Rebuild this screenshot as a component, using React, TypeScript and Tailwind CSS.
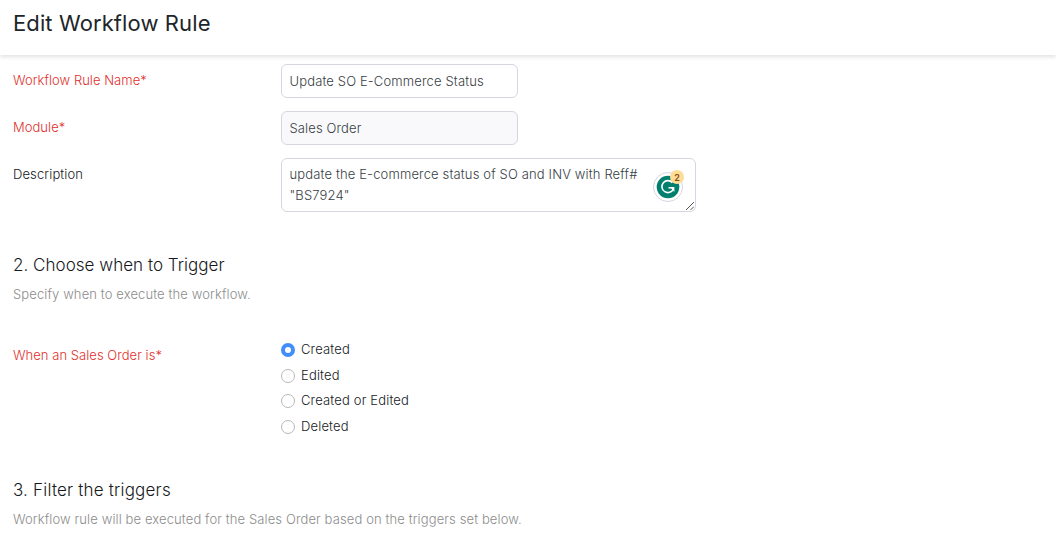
import React from "react";

const triggers = ["Created", "Edited", "Created or Edited", "Deleted"];

function Label({ children, required = false }: { children: string; required?: boolean }) {
  return (
    <div className={`w-[268px] shrink-0 leading-[20px] ${required ? "tracking-[0.04px] text-[#e0302d]" : "tracking-[0.12px] text-[#16191c]"}`}>
      {children}
      {required && "*"}
    </div>
  );
}

function Heading({ children }: { children: React.ReactNode }) {
  return <h2 className="text-[17px] leading-[24px] text-[#16191c]">{children}</h2>;
}

function Hint({ children }: { children: string }) {
  return <p className="mt-[7px] leading-[20px] tracking-[0.115px] text-[#8c8c8c]">{children}</p>;
}

function AssistantBadge() {
  return (
    <div className="absolute left-[371px] top-[12px] h-[32px] w-[32px]">
      <svg width="32" height="32" viewBox="0 0 32 32" fill="none">
        <circle cx="16" cy="17" r="14.5" fill="#fff" stroke="#d7d5e2" />
        <circle cx="16" cy="17" r="11.3" fill="#027e6f" />
        <path d="M20.4 12.6A6 6 0 1 0 21.4 19" stroke="#fff" strokeWidth="1.6" />
        <path d="M16.5 17.8H21.6" stroke="#fff" strokeWidth="1.5" />
        <path d="M18.2 17H22.4V22z" fill="#fff" />
      </svg>
      <span className="absolute left-[18px] top-[0px] flex h-[14px] w-[14px] items-center justify-center rounded-full bg-[#ffdb98] text-[9px] font-semibold leading-none tracking-normal text-[#80500b]">
        2
      </span>
    </div>
  );
}

export default function App() {
  return (
    <main className="h-[555px] w-[1056px] overflow-hidden bg-white font-['Inter',sans-serif] text-[13px] font-[350] text-[#16191c]">
      <header className="h-[55px] bg-white pl-[13px] pt-[8px] shadow-[0_2px_4px_rgba(0,0,0,0.12)]">
        <h1 className="text-[22px] font-normal leading-[30px] tracking-[0.11px] text-[#212529]">Edit Workflow Rule</h1>
      </header>
      <div className="flex flex-col pl-[13px]">
        <div className="mt-[9px] flex h-[34px] items-start">
          <div className="pt-[6px]">
            <Label required>Workflow Rule Name</Label>
          </div>
          <input
            className="h-[34px] w-[237px] rounded-[6px] border border-[#d7d5e2] bg-white px-[7.5px] tracking-[0.14px] text-[#383e45] outline-none"
            defaultValue="Update SO E-Commerce Status"
          />
        </div>
        <div className="mt-[13px] flex h-[34px] items-start">
          <div className="pt-[6px]">
            <Label required>Module</Label>
          </div>
          <div className="h-[34px] w-[237px] rounded-[6px] border border-[#d7d5e2] bg-[#f9f9fb] px-[7.5px] pt-[6px] leading-[21px] tracking-[0.12px] text-[#383e45]">
            Sales Order
          </div>
        </div>
        <div className="mt-[13px] flex h-[54px] items-start">
          <div className="pt-[6px]">
            <Label>Description</Label>
          </div>
          <div className="relative h-[54px] w-[415px]">
            <textarea
              className="block h-[54px] w-[415px] resize-none overflow-hidden rounded-[6px] border border-[#d7d5e2] bg-white px-[7.5px] py-[5px] leading-[21px] tracking-[0.145px] text-[#383e45] outline-none"
              defaultValue={'update the E-commerce status of SO and INV with Reff#\n"BS7924"'}
            />
            <AssistantBadge />
            <svg className="absolute bottom-[2px] right-[2px]" width="8" height="8" viewBox="0 0 8 8" stroke="#444" strokeWidth="0.9">
              <path d="M0 8L8 0M4.5 8L8 4.5" />
            </svg>
          </div>
        </div>
        <section className="mt-[41px] tracking-[0.03px]">
          <Heading>2. Choose when to Trigger</Heading>
          <Hint>Specify when to execute the workflow.</Hint>
        </section>
        <div className="mt-[36px] flex items-start">
          <div className="pt-[5px]">
            <Label required>When an Sales Order is</Label>
          </div>
          <div className="flex flex-col tracking-[0.16px]">
            {triggers.map((name, i) => (
              <label key={name} className="flex h-[25.6px] items-start">
                <span className="flex h-[20px] items-center gap-[6px]">
                  <span
                    className={`h-[14px] w-[14px] rounded-full bg-white ${i === 0 ? "border-[4px] border-[#408dfb]" : "border border-[#b8b8b8]"}`}
                  />
                  {name}
                </span>
              </label>
            ))}
          </div>
        </div>
        <section className="mt-[35.6px] tracking-[0.19px]">
          <Heading>3. Filter the triggers</Heading>
          <Hint>Workflow rule will be executed for the Sales Order based on the triggers set below.</Hint>
        </section>
      </div>
    </main>
  );
}
